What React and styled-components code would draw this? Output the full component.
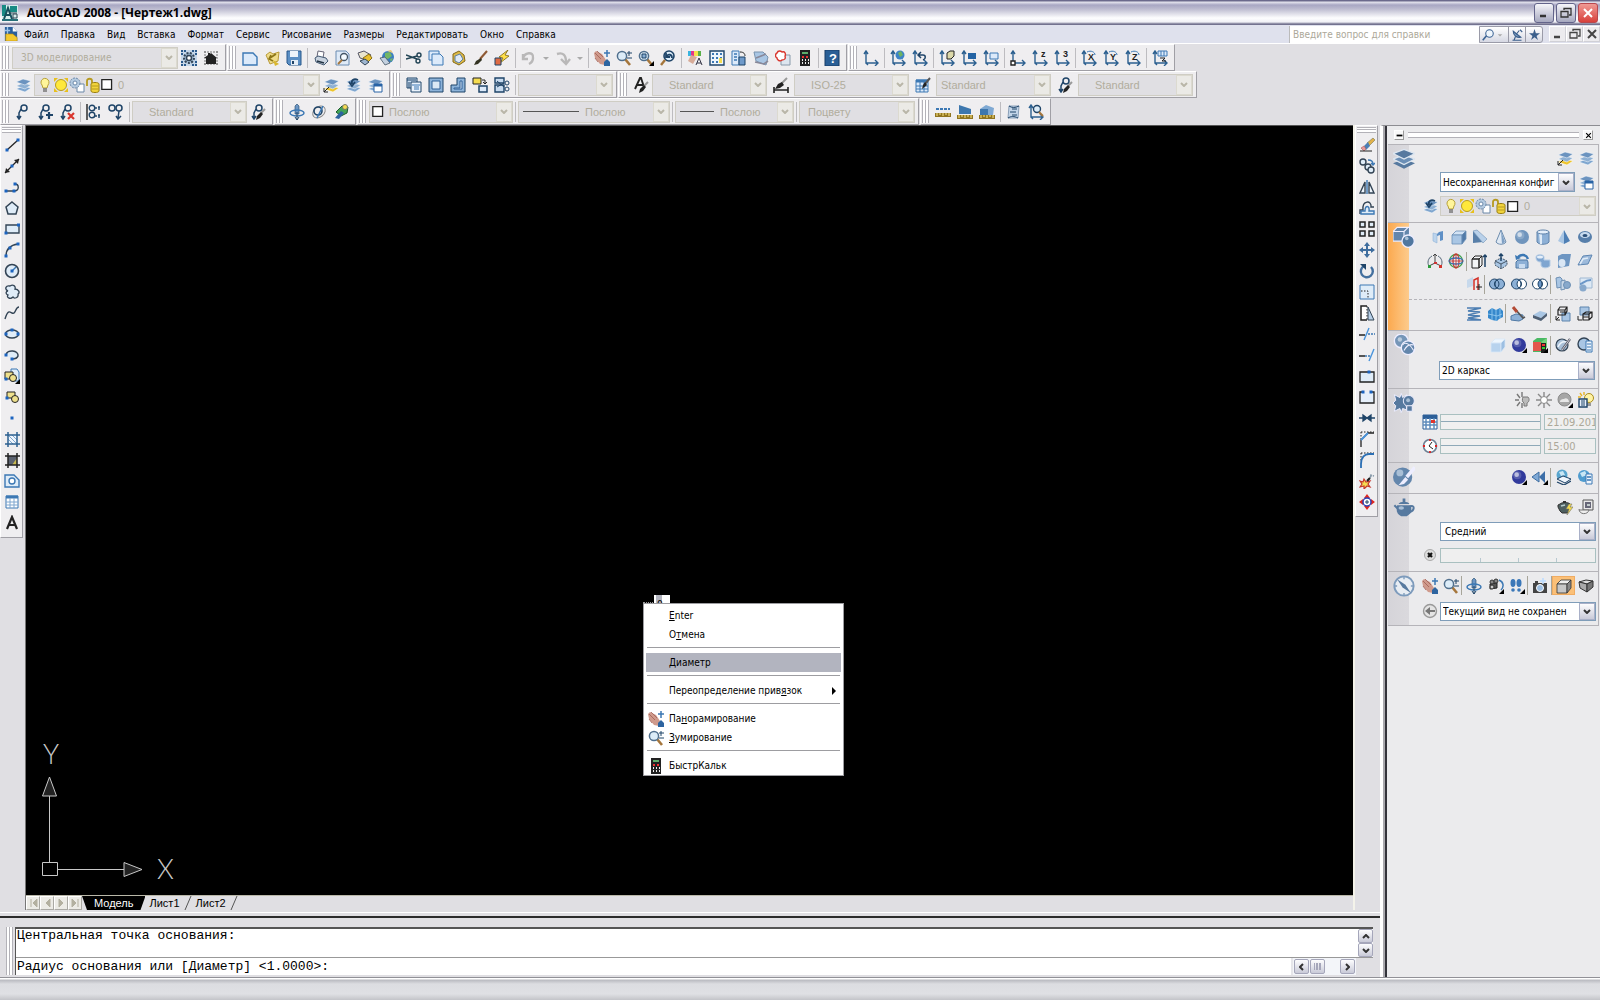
import React from 'react';
import styled, { createGlobalStyle, css } from 'styled-components';

const GlobalStyle = createGlobalStyle`
  * {
    box-sizing: border-box;
  }
  body {
    margin: 0;
    background: #e0dfe3;
    color: #000;
    font-family: "DejaVu Sans Condensed", "Open Sans", sans-serif;
    font-size: 10px;
  }
  button, input, select {
    font: inherit;
    color: inherit;
    margin: 0;
    padding: 0;
  }
`;

/* ---------- icon drawings, all on a 16x16 grid ---------- */

const N = '#1f4468';
const B = '#3c78b4';
const M = '#7fa6cf';
const L = '#d3e3f4';
const Y = '#f5dc50';
const K = '#222';

const Axes = () => (
  <path d="M3 1v12h12M3 13l2 2M1 4l2-3 2 3M12 10l3 3-3 3" stroke="#2c6090" strokeWidth="1.4" fill="none" />
);

const LayerStack = ({ low = M }) => (
  <g stroke="#fff" strokeWidth=".5">
    <path d="M1 12l7-3 8 2-6 4z" fill={low} />
    <path d="M1 9l7-3 8 2-6 4z" fill="#8eb0d3" />
    <path d="M1 5l7-3 8 2-6 4z" fill="#6b93bf" />
  </g>
);

const Leader = () => (
  <g fill="none" stroke={N} strokeWidth="1.5">
    <circle cx="9" cy="4" r="3" />
    <path d="M6 5L4 9v5M2 12l2 3 2-3" />
  </g>
);

const Brush = () => (
  <g>
    <path d="M15 5l-4 4" stroke="#999" strokeWidth="2" />
    <path d="M11 8l2 2-3 4-4 2 1-4z" fill={K} />
  </g>
);

const Corner = () => <path d="M16 11v5h-5z" fill="#000" />;

const Ball = ({ cx = 8, cy = 8, r = 6, fill = '#6f96c2' }) => (
  <g>
    <circle cx={cx} cy={cy} r={r} fill={fill} />
    <circle cx={cx - r / 4} cy={cy - r / 4} r={r / 1.7} fill="#fff" opacity=".18" />
    <circle cx={cx - r / 3} cy={cy - r / 3} r={r / 3} fill="#fff" opacity=".6" />
  </g>
);

const Dot = ({ x, y }) => <rect x={x - 1.5} y={y - 1.5} width="3" height="3" fill="#1c64c0" />;

const Box = ({ front = '#a9c6e4', top = L, side = '#527ba8', stroke = '#6b8fb6' }) => (
  <g stroke={stroke} strokeWidth=".8" strokeLinejoin="round">
    <path d="M1 6l4-4h10l-4 4z" fill={top} />
    <path d="M1 6h10v9H1z" fill={front} />
    <path d="M11 6l4-4v8l-4 5z" fill={side} />
  </g>
);

const Lens = () => (
  <g>
    <path d="M9 9l5 6" stroke="#a5763c" strokeWidth="2.6" />
    <circle cx="6" cy="6" r="4.6" fill="#dcecf8" stroke="#51708e" strokeWidth="1.5" />
  </g>
);

const Letter = ({ children, x = 9, y = 7 }) => (
  <text x={x} y={y} fontFamily="Liberation Sans, sans-serif" fontSize="9" fontWeight="700" fill="#222">{children}</text>
);

const Turn = () => <path d="M6 2c4-2 8 0 8 3" stroke={B} fill="none" />;

const Ruler = ({ y = 11 }) => (
  <g>
    <path d={`M0 ${y}h16v4H0z`} fill="#8f7420" />
    <path d={`M2 ${y}v3M5 ${y}v2M8 ${y}v3M11 ${y}v2M14 ${y}v3`} stroke="#ffe98a" />
  </g>
);

const glyphs = {
  app: <g><path d="M0 0h16v16H0z" fill="#d8efec" /><path d="M0 0h4v11H0zM8 1h7v6H8z" fill="#178a84" /><path d="M2 14L6 3l4 11M4 10h5" stroke="#16505c" strokeWidth="2" fill="none" /><path d="M11 15V9h4v4h-4M7 8h8" stroke="#345" fill="none" /><path d="M0 14h16v2H0z" fill="#276f78" /></g>,
  doc: <g><path d="M1 0h9l5 5v11H1z" fill="#2b5f9c" /><path d="M10 0l5 5h-5z" fill="#fff" /><path d="M4 0v9M1 4h6" stroke="#9cc4ea" strokeWidth="1.5" /><path d="M2 8h8l5 4v4H2z" fill="#f4c92f" stroke="#b98d10" strokeWidth=".7" /></g>,
  gearFrame: <g><path d="M0 0h16v16H0z" fill="#c5d6e8" /><path d="M1 5V1h4M11 1h4v4M15 11v4h-4M5 15H1v-4" stroke="#2b5a8c" strokeWidth="2" fill="none" strokeDasharray="2 1" /><circle cx="8" cy="8" r="5" fill="#9bb6d0" stroke="#345" strokeWidth="2" strokeDasharray="2 1.4" /><circle cx="8" cy="8" r="2.500" fill="#fff" stroke="#345" strokeWidth="1.500" /></g>,
  house: <g><path d="M1 2h14M2 1v14M1 14h14M14 1v14" stroke="#777" strokeDasharray="2 1" fill="none" /><path d="M1 8l4-3V3h2v1l1-1 6 5h-1v6H3V8z" fill="#222" /></g>,
  new: <path d="M1 3h10l4 4v8H1z" fill="#dceafa" stroke={B} strokeWidth="1.4" />,
  open: <g><path d="M2 5l4 9 8-3 1-9-6 2-3-2z" fill="#efdc8a" stroke="#b99b3a" /><path d="M12 4L6 8M7 5L5 9l4 2" stroke="#8d7616" strokeWidth="1.6" fill="none" /><path d="M9 10l6 4-4 2z" fill="#d9b72f" /></g>,
  save: <g><path d="M1 1h14v14H3l-2-2z" fill="#5b8fc4" stroke="#28598c" /><path d="M4 1h8v6H4z" fill="#eef4fb" /><path d="M5 10h7v5H5z" fill="#e4edf6" /><path d="M6 11h2v3H6z" fill={N} /></g>,
  print: <g><path d="M4 7l1-6 6 1-1 6z" fill="#fff" stroke="#667" /><path d="M2 8l3-2 8 2 2 3-4 4-8-3z" fill="#c9d3df" stroke="#445a73" /><path d="M4 11l7 2" stroke="#234" strokeWidth="1.5" /></g>,
  preview: <g><path d="M1 1h10l3 3v11H1z" fill="#dfeaf7" stroke="#6a8cb2" /><circle cx="9" cy="7" r="3.5" fill="#f5fbff" stroke="#456" strokeWidth="1.3" /><path d="M7 10l-4 4" stroke="#a5763c" strokeWidth="2" /></g>,
  publish: <g><path d="M1 3l6-2 7 4-4 5-7-2z" fill="#e8e4ce" stroke="#556" /><path d="M6 8l6-4 3 4-5 5z" fill="#e9c02f" stroke="#8a6f12" /><path d="M3 11l5-2 4 3-4 3z" fill="#9fb6d0" stroke="#345" /></g>,
  globe: <g><circle cx="9" cy="7" r="6" fill="#3a7dc2" /><path d="M6 3l5-1 2 4-4 3-3-1zM11 9l3-1-2 4z" fill="#74b665" /><path d="M1 8l5-1 5 6-5 2z" fill="#c3d0df" stroke="#456" strokeWidth=".8" /><path d="M8 1l4-1 2 3" fill="#e8c57a" /></g>,
  cut: <g stroke="#245" fill="none" strokeWidth="1.4"><path d="M0 5l11 4M0 9l11-3" /><circle cx="13" cy="5" r="2" /><circle cx="12" cy="11" r="2" /></g>,
  copy: <g fill="#dceafa" stroke={B}><path d="M1 1h10v9H1z" /><path d="M4 4h8l3 3v8H4z" /></g>,
  paste: <g><path d="M3 4l6-3 5 4 1 6-6 4-6-3z" fill="#ddb947" stroke="#82691a" /><path d="M5 6l5-2 3 5-4 4-4-2z" fill="#dfeaf7" stroke="#5b7fa6" /></g>,
  brush: <g><path d="M15 1L8 9" stroke="#8f5a35" strokeWidth="2" /><path d="M9 8l1 2-4 4-4 1 2-4z" fill="#332" /></g>,
  bolt: <g><path d="M14 0L5 7l4 1-3 5 9-7-4-1z" fill="#ffe04a" stroke="#7c6410" strokeWidth=".8" /><path d="M1 8h6v7H1z" fill="#df6a43" stroke={N} /></g>,
  undo: <path d="M2 9c1-7 11-8 10-1 0 3-2 5-4 6M2 4v5h5" fill="none" stroke="#b9b8b8" strokeWidth="2.400" />,
  redo: <path d="M2 4c6-2 9 1 9 8M6 9l5 5 4-5" fill="none" stroke="#b9b8b8" strokeWidth="2.400" />,
  down: <path d="M5 7h6l-3 3z" fill="#aaa" />,
  pan: <g><path d="M0 3l2-2 6 3 4 6-1 5-5-1-5-6z" fill="#cf9a8c" /><path d="M1 3l6 6M3 1l6 6M4 12L1 8" stroke="#a16055" strokeWidth=".8" /><path d="M13 0v7M10 3h6" stroke={B} strokeWidth="1.5" /><path d="M10 12l3-3 3 3v4h-6z" fill="#2d64a0" /></g>,
  zoomRt: <g><Lens /><path d="M13 1v5M11 3h5M11 8h5" stroke={N} /></g>,
  zoomWin: <g><Lens /><path d="M4 4h4v4H4z" fill="#88aed4" stroke={N} /><Corner /></g>,
  zoomPrev: <g><circle cx="9" cy="6" r="5" fill="#dcecf8" stroke={N} strokeWidth="1.6" /><path d="M5 10l-4 5" stroke="#a5763c" strokeWidth="2.4" /><path d="M12 8c0-4-4-4-5-2M6 3v4h4" stroke={N} strokeWidth="1.8" fill="none" /></g>,
  props: <g><path d="M1 1h13v5H1z" fill="#f5e04a" /><path d="M1 1h3v5H1z" fill="#38b4e0" /><path d="M4 1h3v5H4z" fill="#e2348c" /><path d="M11 1h3v5h-3z" fill="#59b048" /><path d="M1 11l3-6 6 2-4 7z" fill="#d7ab98" /><path d="M9 15l3-7 3 7M10 13h4" stroke="#334" fill="none" /></g>,
  grid: <g><path d="M1 1h14v14H1z" fill="#eef5fc" stroke={N} strokeWidth="1.4" /><path d="M3 4h10M3 8h10M3 12h10" stroke={B} strokeWidth="2" strokeDasharray="2 2" /><path d="M10 8h3v5h-3z" fill={Y} /></g>,
  palettes: <g><path d="M1 1h7v14H1z" fill="#dceafa" stroke={B} /><path d="M3 4h3M3 7h3M3 10h3" stroke={B} strokeWidth="1.4" /><path d="M8 7h6v8H8z" fill="#6f9aca" stroke={N} /><path d="M9 2c4 0 5 2 5 4" stroke={K} fill="none" /></g>,
  sheets: <g><path d="M1 2h9l5 5-2 8-10-4z" fill="#a9c6e4" stroke="#7893ae" /><path d="M3 8l10-4M2 12l9 2 4-3" stroke="#889" strokeWidth="1.6" fill="none" /></g>,
  markup: <g><path d="M6 5h9v10H6z" fill="#dde6f0" stroke="#89a" /><path d="M2 3c1-3 4-2 5-1 3-1 4 2 3 4 1 3-1 4-3 4-2 2-5 0-5-2-2-1-2-4 0-5z" fill="#fff" stroke="#d9362e" strokeWidth="1.4" /></g>,
  calc: <g><path d="M3 0h10v16H3z" fill="#222" /><path d="M5 2h6v2H5z" fill="#5fae6a" /><path d="M5 7h2M9 7h2" stroke="#e33" strokeWidth="2" /><path d="M5 10h1m2 0h1m2 0h1M5 13h1m2 0h1m2 0h1" stroke="#eee" strokeWidth="2" /></g>,
  help: <g><path d="M1 0h14v16H1z" fill="#2a5f96" stroke="#173d66" /><text x="5" y="13" fontFamily="Liberation Sans, sans-serif" fontSize="13" fontWeight="700" fill="#fff">?</text></g>,

  ucs: <Axes />,
  ucsWorld: <g><Axes /><circle cx="10" cy="5" r="4.500" fill="#3d83c6" /><path d="M8 3l3-2 2 4-3 2z" fill="#6db35f" /></g>,
  ucsPrev: <g><Axes /><path d="M7 5h4c3 0 3 4 0 5M9 2L6 5l3 3" stroke={N} strokeWidth="1.5" fill="none" /></g>,
  ucsFace: <g><Axes /><path d="M8 3l3-2h4v5l-3 3H8z" fill="#dcd8a9" stroke={K} /></g>,
  ucsObj: <g><Axes /><path d="M7 3h8v6H7z" fill="#2464a4" /></g>,
  ucsView: <g><Axes /><path d="M7 3h8v6H7z" fill="#dceafa" stroke={B} /></g>,
  ucsOrigin: <g><Axes /><path d="M1 11h4v4H1z" fill="#fff" stroke={K} strokeWidth="1.4" /></g>,
  ucsZ: <g><Axes /><Letter>z</Letter></g>,
  ucs3: <g><Axes /><Letter>3</Letter></g>,
  ucsX: <g><Axes /><Letter x={7} y={10}>X</Letter><Turn /></g>,
  ucsY: <g><Axes /><Letter x={7} y={10}>Y</Letter><Turn /></g>,
  ucsZr: <g><Axes /><Letter x={7} y={10}>Z</Letter><Turn /></g>,
  ucsApply: <g><Axes /><path d="M6 1h9v5H6zM9 1v5M12 1v5" fill="#dceafa" stroke={B} /><path d="M8 8h5l-3 3h4" stroke={K} fill="none" /></g>,

  layers: <LayerStack />,
  bulb: <g><path d="M4 5a4 4 0 1 1 7 3l-1 3H6L5 8a4 4 0 0 1-1-3z" fill="#fff59a" stroke="#b7a13a" /><path d="M6 12h4M6 14h4" stroke="#777" strokeWidth="1.4" /></g>,
  sun: <g><path d="M1 1h4L1 5zM15 1h-4l4 4zM1 15h4l-4-4zM15 15h-4l4-4z" fill="#e8c01c" /><circle cx="8" cy="8" r="5.500" fill="#ffe83b" stroke="#b79c20" /></g>,
  freeze: <g><path d="M8 7h7v8H8z" fill="#fff" stroke="#6b88a8" /><circle cx="6" cy="6" r="5" fill="#b4cae0" stroke="#6b88a8" strokeDasharray="2 1" /><circle cx="6" cy="6" r="2" fill="#fff" stroke="#6b88a8" /></g>,
  lock: <g><path d="M2 9V4c0-3 5-3 5 0v2" stroke="#b69a20" strokeWidth="1.8" fill="none" /><path d="M6 7c0-2 8-2 8 0v7c0 2-8 2-8 0z" fill="#f2d43c" stroke="#967c10" /><path d="M7 9h6M7 12h6" stroke="#b69a20" /></g>,
  swatch: <path d="M1 2h12v12H1z" fill="#fff" stroke="#222" strokeWidth="1.6" />,
  layerCurrent: <g><LayerStack low="#edc42c" /><path d="M1 15l5-5M1 11v4h4" stroke={K} fill="none" /></g>,
  layerPrev: <g><LayerStack /><path d="M7 7c-1-4 2-6 6-4M4 5l3 4 3-4" stroke={N} strokeWidth="1.8" fill="none" /></g>,
  layerState: <g><LayerStack /><path d="M7 7h8v8H7z" fill="#fff" stroke="#2863a5" /><path d="M7 7h8v2.500H7z" fill="#2863a5" /></g>,
  refEdit: <g><path d="M1 1h10v10H1z" fill="#c9dcf0" stroke={N} /><path d="M1 3h9M3 5v6" stroke={N} /><path d="M5 5h10v10H5z" fill="#eaf2fb" stroke={N} /><path d="M6 8h8M8 10h5M8 12h5" stroke={B} /></g>,
  vpNew: <g><path d="M1 1h14v14H1z" fill="#8db3d9" stroke={N} /><path d="M4 4h8v8H4z" fill="#dbe8f5" stroke="#2e6198" /></g>,
  vpPoly: <g><path d="M7 1h8v14H1V8h6z" fill="#8db3d9" stroke={N} /><path d="M10 4h2v8H4v-1h6z" fill="#dbe8f5" stroke="#2e6198" /></g>,
  vpObj: <g><path d="M1 1h8v6H1z" fill={Y} stroke={K} /><path d="M7 9h8v6H7z" fill="#dceafa" stroke={N} strokeWidth="1.5" /><path d="M10 3h3v4M11 5l2 2 2-2" stroke={K} fill="none" /></g>,
  vpClip: <g><path d="M1 1h9v5H1zM1 8h9v7H1z" fill="#c9dcf0" stroke={N} strokeWidth="1.4" /><path d="M3 4l7 6M3 10l7-4" stroke={N} /><circle cx="13" cy="6" r="2" fill="none" stroke={N} /><circle cx="13" cy="12" r="2" fill="none" stroke={N} /></g>,
  textStyle: <g><path d="M2 12L7 1h1l3 9M4 8h6" stroke={K} strokeWidth="1.9" fill="none" /><Brush /></g>,
  dimStyle: <g><path d="M14 1l-6 6" stroke="#999" strokeWidth="2" /><path d="M9 5l2 3-4 3-5 1 3-5z" fill={K} /><path d="M1 13h14M1 10v6M15 10v6" stroke={K} strokeWidth="1.6" /></g>,
  tableStyle: <g><path d="M1 3h12v12H1z" fill="#dceafa" stroke={B} /><path d="M1 4h12" stroke={B} strokeWidth="3" /><path d="M5 5v10M9 5v10M1 9h12M1 12h12" stroke={B} /><path d="M15 1l-5 6" stroke="#555" strokeWidth="2" /><path d="M10 5l2 3-5 4 1-4z" fill={K} /></g>,
  leaderStyle: <g><Leader /><Brush /></g>,

  leader: <Leader />,
  leaderAdd: <g><Leader /><path d="M12 8v7M9 11h7" stroke={N} strokeWidth="2.2" /></g>,
  leaderDel: <g><Leader /><path d="M9 9l6 6M15 9l-6 6" stroke="#d9362e" strokeWidth="2.2" /></g>,
  leaderAlign: <g fill="none" stroke={N} strokeWidth="1.4"><path d="M1 0v16" stroke={K} /><circle cx="6" cy="4" r="2.800" /><circle cx="6" cy="11" r="2.800" /><path d="M9 4h5M9 12h5M13 2v4M13 10v4" strokeDasharray="2 1" /></g>,
  leaderCollect: <g fill="none" stroke={N} strokeWidth="1.5"><circle cx="4" cy="4" r="3" /><circle cx="11" cy="4" r="3" /><path d="M11 7l-1 7M8 12l2 3 3-3" /></g>,
  orbit: <g><path d="M6 2l2-2 2 2v8H6z" fill="#6c96c4" stroke={N} strokeWidth=".6" /><ellipse cx="8" cy="9" rx="7" ry="3" fill="none" stroke={B} strokeWidth="1.5" /><path d="M8 8v8M6 13l2 3 2-3" stroke={N} fill="none" /></g>,
  freeOrbit: <g fill="none"><ellipse cx="8" cy="8" rx="7" ry="5" stroke="#888" transform="rotate(-40 8 8)" /><circle cx="7" cy="7" r="4" stroke={N} strokeWidth="1.6" /><path d="M12 2l-6 12" stroke={B} strokeWidth="1.6" /></g>,
  contOrbit: <g><path d="M3 8l6-6 6 1-1 6-6 3z" fill="#43a457" stroke="#1c5a2c" /><path d="M2 14l6-7 3 2-5 6z" fill="#2b62a0" /><circle cx="12" cy="3" r="2.500" fill={Y} stroke="#776" /></g>,
  dist: <g><path d="M1 5h14" stroke={B} strokeWidth="2" strokeDasharray="3 1" /><Ruler y={9} /></g>,
  area: <g><path d="M2 1l12 4v5H2z" fill="#3d77ae" /><Ruler /></g>,
  mass: <g><path d="M1 5l6-4 8 3-1 7H1z" fill="#7fa9d3" /><path d="M1 5h8v6H1z" fill="#3d77ae" /><Ruler /></g>,
  list: <g><path d="M3 2h10l-1 12H2z" fill="#c3d5e8" stroke="#8aa0b8" /><path d="M3 2c3 2 6 2 10 0M2 14c3-2 6-2 10 0M6 5h5M4 8h6M6 11h5" stroke={N} fill="none" /></g>,
  locate: <g><Axes /><circle cx="9" cy="5" r="3.500" fill="#dcecf8" stroke={N} strokeWidth="1.4" /><path d="M11 8l4 4" stroke="#a5763c" strokeWidth="2" /></g>,

  line: <g><path d="M3 13L14 3" stroke={K} strokeWidth="1.3" /><Dot x={3} y={13} /><Dot x={14} y={3} /></g>,
  xline: <g><path d="M1 15L15 1" stroke={K} strokeWidth="1.3" /><path d="M1 15l1-5 4 4zM15 1l-5 1 4 4z" fill={K} /><Dot x={8} y={8} /></g>,
  pline: <g><path d="M1 12h9c6 0 5-7 1-7" stroke="#345" strokeWidth="1.4" fill="none" /><Dot x={2} y={12} /><Dot x={10} y={12} /><Dot x={11} y={5} /></g>,
  polygon: <path d="M8 2l6 5-2 7H4L2 7z" fill="#dfecf8" stroke="#345" strokeWidth="1.5" />,
  rect: <g><path d="M2 4h13v8H2z" fill="#dfecf8" stroke="#345" strokeWidth="1.4" /><Dot x={14.5} y={4} /><Dot x={2} y={12} /></g>,
  arc: <g><path d="M2 14C2 7 7 3 14 2" stroke="#345" strokeWidth="1.4" fill="none" /><Dot x={2} y={14} /><Dot x={6} y={6} /><Dot x={14} y={2} /></g>,
  circle: <g><circle cx="8" cy="8" r="6.500" fill="#dfecf8" stroke="#345" strokeWidth="1.6" /><path d="M8 8l4-4" stroke={B} strokeWidth="1.4" /><Dot x={8} y={8} /></g>,
  cloud: <path d="M4 7C0 5 2 1 6 2c3-2 6 0 5 3 4 0 5 4 3 5 1 4-4 5-5 3-3 3-7 0-5-2-3-1-2-4 0-4z" fill="#dfecf8" stroke="#345" strokeWidth="1.3" />,
  spline: <path d="M1 14c3-10 5-7 7-6 4 2 3-6 7-6" fill="none" stroke="#345" strokeWidth="1.4" />,
  ellipse: <g><ellipse cx="8" cy="8" rx="6.500" ry="4" fill="#dfecf8" stroke="#345" strokeWidth="1.5" /><Dot x={2} y={8} /><Dot x={14} y={8} /><Dot x={8} y={4} /></g>,
  ellArc: <g><path d="M2 8c1-6 13-5 12 1-1 3-4 3-6 3" fill="#dfecf8" stroke="#345" strokeWidth="1.5" /><Dot x={2} y={8} /><Dot x={8} y={12} /></g>,
  insert: <g><path d="M7 1h6l2 3v9H7z" fill="#dfecf8" stroke={B} /><path d="M1 4h8v7H1z" fill="#eee08c" stroke={K} /><circle cx="9" cy="10" r="3.500" fill="#eee08c" stroke={K} /><Dot x={2} y={11} /><Corner /></g>,
  block: <g><path d="M3 3h8v6H3z" fill="#eee08c" stroke={K} /><circle cx="11" cy="10" r="3.500" fill="#eee08c" stroke={K} /><Dot x={3} y={9} /></g>,
  point: <Dot x={8} y={8} />,
  hatch: <g><path d="M4 4h9v9H4z" fill="#eef5fc" /><path d="M4 4l9 9M4 8l5 5M8 4l5 5" stroke={M} /><path d="M1 4h15M1 13h15M4 1v15M13 1v15" stroke="#2c6090" strokeWidth="1.5" /></g>,
  gradient: <g><path d="M4 4h9v9H4z" fill="#5b6270" /><path d="M8 13l5-7v7z" fill="#c9ba50" /><path d="M1 4h15M1 13h15M4 1v15M13 1v15" stroke={K} strokeWidth="1.5" /></g>,
  region: <g><path d="M1 2h9l5 5v7H1z" fill="#dfecf8" stroke={B} strokeWidth="1.4" /><circle cx="8" cy="8" r="3" fill="#fff" stroke={B} strokeWidth="1.4" /></g>,
  table: <g><path d="M2 2h12v12H2z" fill="#fff" stroke={B} /><path d="M2 3h12" stroke={B} strokeWidth="3" /><path d="M6 4v10M10 4v10M2 8h12M2 11h12" stroke={M} /></g>,
  mtext: <path d="M3 14L8 2l5 12M5 10h6" stroke="#222" strokeWidth="2.200" fill="none" />,

  erase: <g><path d="M8 6l6-5 2 2-6 6z" fill="#e2b24a" stroke="#775" strokeWidth=".6" /><path d="M5 9l4-4 2 4-4 4z" fill="#4b7fb5" /><path d="M2 11l3-2 2 3-2 2z" fill="#e79a9a" stroke="#a55" strokeWidth=".6" /><path d="M1 14h12" stroke={K} /></g>,
  copyObj: <g fill="#dfecf8" stroke="#345" strokeWidth="1.4"><circle cx="4" cy="4" r="3" /><circle cx="9" cy="9" r="3" /><circle cx="12" cy="12" r="3" /><path d="M9 2c3 0 5 1 5 4M12 5l2 2 2-2" fill="none" stroke={B} /></g>,
  mirror: <g><path d="M6 3v11H1zM10 3v11h5z" fill="#eef5fc" stroke="#345" strokeWidth="1.4" /><path d="M8 1v14" stroke={B} strokeWidth="1.4" /></g>,
  offset: <g><path d="M1 14v-4h3C3 0 13 0 12 7h3" stroke="#345" strokeWidth="1.400" fill="none" /><path d="M2 14h13v-3h-5c1-6-4-6-4 0H2z" fill="#dfecf8" stroke={B} strokeWidth="1.400" /></g>,
  array: <g fill="#dfecf8" stroke="#222" strokeWidth="1.5"><path d="M1 1h5v5H1zM10 1h5v5h-5zM1 10h5v5H1zM10 10h5v5h-5z" /></g>,
  move: <g fill="#3f6d9e"><path d="M8 0l3 4H9v3h3V5l4 3-4 3V9H9v3h2l-3 4-3-4h2V9H4v2L0 8l4-3v2h3V4H5z" /></g>,
  rotate: <g><path d="M5 3a6 6 0 1 0 7 1" fill="none" stroke="#44709f" strokeWidth="2.4" /><path d="M1 1h6v6z" fill={N} /></g>,
  scale: <g><path d="M1 1h14v14H1z" fill="#dfecf8" stroke={B} /><path d="M2 7h7v8" fill="none" stroke={K} strokeDasharray="1.500 1.500" /></g>,
  stretch: <g><path d="M8 1H2v14h6" fill="#fff" stroke={K} strokeWidth="1.500" /><path d="M8 1v14" stroke={K} strokeDasharray="1.500 1.500" /><path d="M9 2l6 13H9z" fill="#b7cfe8" stroke="#345" /></g>,
  trim: <g><path d="M0 9h6" stroke={K} strokeWidth="1.500" /><path d="M9 8h7" stroke={B} strokeDasharray="2 1" strokeWidth="1.300" /><path d="M5 14l5-12" stroke="#4a94dc" strokeWidth="1.400" /></g>,
  extend: <g><path d="M0 9h6" stroke={K} strokeWidth="1.500" /><path d="M6 9h6" stroke={B} strokeDasharray="2 1" strokeWidth="1.300" /><path d="M10 14l5-12" stroke="#4a94dc" strokeWidth="1.400" /></g>,
  breakPt: <g><path d="M1 4h14v10H1z" fill="#dfecf8" stroke={K} strokeWidth="1.300" /><Dot x={10} y={4} /></g>,
  breakGap: <g><path d="M1 3h14v11H1z" fill="#e6effa" /><path d="M4 3H1v11h14V3h-3" fill="none" stroke={K} strokeWidth="1.300" /><Dot x={4} y={3} /><Dot x={12} y={3} /></g>,
  join: <path d="M0 8h5M11 8h5M4 5l4 3-4 3zM12 5L8 8l4 3z" stroke={N} fill={N} strokeWidth="1.300" />,
  chamfer: <g fill="none"><path d="M2 1h13M2 1v8" stroke={K} strokeDasharray="1.500 1.500" /><path d="M2 16V9l7-7h6" stroke={K} strokeWidth="1.300" /><path d="M2 9l7-7" stroke="#4a94dc" strokeWidth="1.800" /></g>,
  fillet: <g fill="none"><path d="M2 1h13M2 1v8" stroke={K} strokeDasharray="1.500 1.500" /><path d="M2 16v-4C2 5 6 2 10 2h5" stroke="#2c6fb4" strokeWidth="1.800" /></g>,
  explode: <g><path d="M9 7l4-5M11 2l4 1" stroke="#89a" strokeWidth="1.600" strokeDasharray="2 1" /><path d="M1 8l3 1 1-3 2 3 4-1-2 3 2 3-3-1-3 3v-3l-4 1 2-3z" fill={Y} stroke="#c4362c" strokeWidth="1.200" /><path d="M8 8l3-3" stroke={K} strokeWidth="2.200" /></g>,
  center: <g><path d="M8 0l3 4H5zM8 16l3-4H5zM0 8l4-3v6zM16 8l-4-3v6z" fill="#e0271f" /><circle cx="8" cy="8" r="4" fill="#fff" stroke="#2c3fb4" strokeWidth="1.500" /><path d="M8 6v4M6 8h4" stroke={N} /></g>,

  polysolid: <g><path d="M3 4l4 1v9l-4-2z" fill="#bdd4ec" stroke="#8fb2d8" strokeWidth=".6" /><path d="M7 5l2-2 4-1v9l-3 1V6L7 7z" fill="#5f90c6" /></g>,
  box: <Box />,
  wedge: <g><path d="M1 2l10 11-10 1z" fill="#587fa9" /><path d="M1 2l4-1 10 9-4 4z" fill="#b9d1ea" stroke="#7d9cbd" strokeWidth=".7" /></g>,
  cone: <g><path d="M8 1l5 12c-2 3-8 3-10 0z" fill="#dfe9f4" stroke="#6d8cad" /><path d="M8 2l4 11-3 2z" fill="#7fa0c4" /></g>,
  sphere: <Ball r={7} fill="#7095bd" />,
  cylinder: <g><path d="M2 3v10c2 3 10 3 12 0V3z" fill="#8db0d6" stroke="#5e82aa" /><path d="M4 4h3v11H5z" fill="#dfebf7" /><ellipse cx="8" cy="3" rx="6" ry="2" fill="#e5effa" stroke="#5e82aa" /></g>,
  pyramid: <g><path d="M8 1L2 12l6 3z" fill="#a9c6e4" /><path d="M8 1l6 11-6 3z" fill="#4e7fb5" /></g>,
  torus: <g><ellipse cx="8" cy="8" rx="7" ry="6" fill="#577fab" /><ellipse cx="8" cy="6" rx="5" ry="3" fill="#c8dbef" /><ellipse cx="8" cy="6.500" rx="2.500" ry="1.500" fill="#2b4f78" /></g>,
  helix3: <g><path d="M8 1v9M8 10l-6 3M8 10l6 3M6 3l2-2 2 2" stroke="#444" fill="none" /><path d="M5 3C1 5 0 10 2 13M11 3c4 2 5 7 3 10" fill="none" stroke="#567" /><path d="M7 9h3v2H7z" fill="#c33" /><path d="M1 12h3v3H1z" fill="#2c9a3c" /><path d="M12 12h3v3h-3z" fill="#d2342c" /></g>,
  gizmo: <g fill="none" strokeWidth="1.300"><circle cx="8" cy="8" r="6.500" stroke="#3ba04a" /><ellipse cx="8" cy="8" rx="3" ry="7" stroke="#cf3c34" /><ellipse cx="8" cy="8" rx="7" ry="3" stroke="#3a6db0" /><path d="M1 8h14M8 1v14" stroke="#b33" strokeWidth=".8" /></g>,
  extrude: <g><path d="M1 6l3-3h7L8 6zM1 6h7v9H1zM8 6l3-3v9l-3 3z" fill="#f4f6f8" stroke="#222" strokeLinejoin="round" /><path d="M14 14V2M12 4l2-2 2 2" stroke={N} strokeWidth="1.500" fill="none" /></g>,
  pull: <g><path d="M2 8l6-3 6 3v4l-6 4-6-4z" fill="#a9c6e4" stroke="#456" strokeDasharray="2 1" /><path d="M2 8l6 3 6-3M8 11v5" stroke="#456" fill="none" /><path d="M8 8V1M6 3l2-2 2 2" stroke={N} fill="none" strokeWidth="1.500" /></g>,
  revolve: <g><path d="M2 9l2-2h9l1 2v6H2z" fill="#8db0d6" stroke="#4e78a4" /><path d="M5 11h6v4H5z" fill="#c9dcf0" /><path d="M4 4c3-3 8-3 10 2" fill="none" stroke={B} strokeWidth="2.400" /><path d="M1 2l1 5 5-2z" fill={B} /></g>,
  sweep: <g><path d="M1 4c0-3 8-3 8 0v3h6v6c-3 3-9 2-9-1V9c-3 0-5-1-5-5z" fill="#7fa5d0" stroke="#b7cde5" /><ellipse cx="5" cy="4" rx="3" ry="1.500" fill="#e5effa" /></g>,
  loft: <g><path d="M2 3l4-2h9l-2 12-11 2z" fill="#6e96c2" /><ellipse cx="6" cy="10" rx="3.500" ry="4" fill="#d9e6f4" /></g>,
  planar: <g><path d="M1 12l5-9 9-1-4 9z" fill="#9dbadb" stroke="#5e86b2" /><path d="M3 11l3-5 5-1" fill="none" stroke="#dfebf7" strokeWidth="1.500" /></g>,
  section: <g><path d="M1 4l6-3v9l-6 2z" fill="#c7d9ec" /><path d="M8 14V4l4-2v12" fill="none" stroke="#d3322a" strokeWidth="1.500" /><path d="M13 8v6M10 11h6" stroke={K} /></g>,
  union: <g stroke={N} fill="#8cb0d6"><circle cx="5.500" cy="8" r="5" /><circle cx="10.500" cy="8" r="5" /><path d="M8 4a5 5 0 0 1 0 8 5 5 0 0 1 0-8z" /></g>,
  subtract: <g stroke={N}><circle cx="10.500" cy="8" r="5" fill="#fff" /><circle cx="5.500" cy="8" r="5" fill="#8cb0d6" /><path d="M8 4a5 5 0 0 1 0 8 5 5 0 0 1 0-8z" fill="#fff" /></g>,
  intersect: <g stroke={N} fill="#fff"><circle cx="10.500" cy="8" r="5" /><circle cx="5.500" cy="8" r="5" /><path d="M8 4a5 5 0 0 1 0 8 5 5 0 0 1 0-8z" fill="#6b97c8" /></g>,
  interfere: <g><path d="M1 2l4-1 2 2v8l-5 1z" fill="#a9c6e4" stroke="#6e90b4" /><path d="M6 5l4-1v9l-4 1z" fill="#c9d8e8" stroke="#6e90b4" /><circle cx="12" cy="9" r="3.500" fill="#88a9cc" stroke="#6e90b4" /></g>,
  xedges: <g><path d="M3 2h12v10H3z" fill="#dde9f5" stroke="#9fb8d2" /><path d="M3 8c3 0 4-4 11-4" stroke="#6b97c8" strokeWidth="2" fill="none" /><circle cx="6" cy="12" r="3.500" fill="#88a9cc" /></g>,
  helix: <path d="M1 2h14L2 5l12 1L2 9l12 1L2 12l13 2H1" fill="none" stroke="#4c7eb2" strokeWidth="1.500" />,
  polymesh: <g><path d="M1 5l4-3 4 2 4-2 3 3v6l-4 2-2 2-5-1-4-2z" fill="#3688cc" /><path d="M5 2v12M9 4v11M13 3v9M1 8l5 1 4 1 5-2" stroke="#9cd0f4" strokeWidth=".8" fill="none" /></g>,
  slice: <g><path d="M1 10l5-2 7 1v4l-4 2-8-1z" fill="#8db0d6" stroke="#4e78a4" /><path d="M5 3l8 9 2-1" stroke="#555" strokeWidth="1.800" fill="none" /><path d="M3 1l4 5" stroke="#b34a35" strokeWidth="3" /></g>,
  thicken: <g><path d="M1 9l7-4 7 2-6 5z" fill="#a9c6e4" /><path d="M1 9l8 3v3l-8-3zM9 12l6-5v3l-6 5z" fill="#4e5f74" /></g>,
  convSolid: <g><path d="M7 7h8v8H7z" fill="#a9c6e4" stroke="#5d84ad" /><path d="M3 4h7v5H3zM3 4l2-3h7v4l-2 4M10 4l2-3M5 6h5" fill="none" stroke={K} strokeWidth="1.200" /><path d="M1 10v4h4M1 14l3-3" stroke={K} fill="none" /></g>,
  convSurf: <g><path d="M3 1h9v8H3z" fill="#a9c6e4" stroke="#5d84ad" /><path d="M6 8l3-2h6v5l-3 3H6zM6 8h6l3-2M12 8v6M6 11h6" fill="none" stroke={K} strokeWidth="1.200" /><path d="M1 10v4h4" stroke={K} fill="none" /></g>,
  vsBox: <Box front="#b8d3ee" top="#eef6fd" side="#9dbfe2" stroke="#d9e9f8" />,
  vsBall: <g><Ball r={7} fill="#313a9c" /><Corner /></g>,
  rgb: <g><path d="M1 4l4-3h10v9l-4 5H1z" fill="#4ab864" /><path d="M1 5h8v9H1z" fill="#e2564c" /><path d="M9 5l6-4v9z" fill="#76d47e" /><path d="M9 6h5v10H9z" fill="#222" /><path d="M10 8h3" stroke="#e33" strokeWidth="2" /><path d="M10 11h3" stroke="#3c3" strokeWidth="2" /><Corner /></g>,
  vsEdit: <g><circle cx="7" cy="8" r="6" fill="#a9c0d8" stroke="#345" strokeWidth="1.200" /><path d="M3 10c2-5 5-6 9-5" stroke="#eef5fc" strokeWidth="1.500" fill="none" /><path d="M15 2L7 13" stroke="#556" strokeWidth="2.200" /><path d="M15 2L7 13" stroke="#eee" strokeWidth=".8" /></g>,
  vsManage: <g><circle cx="7" cy="7" r="6" fill="#a9c6e4" stroke="#345" strokeWidth="1.400" /><path d="M9 4h6v11H9z" fill="#eef5fc" stroke={B} /><path d="M10 7h4M10 10h4M10 13h4" stroke={B} /></g>,
  lightUser: <g stroke="#777" fill="none"><path d="M7 0v5M7 11v5M0 8h4M2 2l3 4M2 14l3-4" strokeWidth="1.400" /><path d="M8 5h5c2 2 1 5-1 6v3H9v-3C7 10 7 7 8 5z" fill="#bbb" /></g>,
  lightSun: <g stroke="#8a8a8a" fill="#fff"><path d="M8 0v16M0 8h16M2 2l12 12M14 2L2 14" strokeWidth="1.400" /><circle cx="8" cy="8" r="3.500" /></g>,
  sky: <g><circle cx="7.500" cy="7.500" r="6.500" fill="#a6a6a6" stroke="#8a8a8a" /><path d="M3 10c0-3 3-3 4-3 2-2 5 0 5 3z" fill="#e6e6e6" /><Corner /></g>,
  lightList: <g><path d="M6 0v3M2 1l2 3M0 5h3" stroke="#e7b426" strokeWidth="1.400" /><circle cx="11" cy="6" r="4.500" fill="#fff3a4" stroke="#a98d1e" /><path d="M9 11h4v3H9z" fill="#999" /><path d="M1 7h8v8H1z" fill="#e9f1fb" stroke={N} strokeWidth="1.400" /><path d="M3 9h4M3 11h4M3 13h4" stroke={N} /></g>,
  calendar: <g><path d="M1 1h14v14H1z" fill="#fff" stroke="#2c5f98" /><path d="M1 3h14" stroke="#2c5f98" strokeWidth="4" /><path d="M1 8h14M1 11h14M4 4v11M8 4v11M12 4v11" stroke="#5f8cbc" strokeWidth="1.500" /><path d="M9 6h4v3H9z" fill="#e2342c" /></g>,
  clock: <g><circle cx="8" cy="8" r="6.500" fill="#fff" stroke="#6d8094" strokeWidth="1.600" /><path d="M8 1v2M15 8h-2M8 15v-2M1 8h2" stroke="#d22" strokeWidth="1.800" /><path d="M10 4L7 8l4 3" stroke={K} fill="none" /></g>,
  matArrow: <g><path d="M0 8l7-5v10z" fill="#7fa9d6" stroke="#3d6da0" /><path d="M7 8l6-6v12z" fill="#3c6ea8" /><Corner /></g>,
  matLayers: <g><circle cx="7" cy="6" r="5.500" fill="#59a6cf" /><path d="M4 3l4-1 2 4-4 1z" fill="#c9e7f5" /><path d="M2 10l6-3 8 3-6 4z" fill="#eef5fc" stroke={N} /><path d="M2 13l7 3 7-4" fill="none" stroke={N} strokeWidth="1.300" /></g>,
  matMap: <g><circle cx="7" cy="7" r="6" fill="#4f9ccf" /><path d="M3 4l5-2 2 4-5 2z" fill="#c9e7f5" /><path d="M9 5h6v10H9z" fill="#eef5fc" stroke={B} /><path d="M10 8h4M10 11h4" stroke={B} strokeWidth="1.500" /></g>,
  render: <g><path d="M3 5c2-2 8-2 10 0l-1 7-2 2H5l-2-2L1 8V6z" fill="#4e5f5f" stroke="#333" /><path d="M6 2h3v2H6z" fill="#333" /><path d="M4 7l4-1" stroke="#b8cccc" strokeWidth="1.500" /><path d="M12 5l-3 5h3l-2 6 6-8h-3l2-3z" fill={Y} stroke="#776" strokeWidth=".6" /></g>,
  renderWin: <g><path d="M5 1h10v10H5z" fill="#e8e8e8" stroke="#555" /><path d="M7 3h6v6H7z" fill="#667" /><path d="M9 5h3v2H9z" fill="#c2cccc" /><path d="M1 10c0 6 9 6 10 1H1" fill="#eee" stroke="#777" /></g>,
  cancel: <g><circle cx="8" cy="8" r="5.500" fill="#ddd" stroke="#aaa" /><path d="M6 6l4 4M10 6l-4 4" stroke="#111" strokeWidth="2.200" /></g>,
  camOrbit: <g><path d="M2 6l7-1v5l-7 1z" fill="#555" stroke="#222" /><circle cx="4" cy="9" r="2" fill="#ccc" stroke="#333" /><circle cx="4" cy="4" r="2" fill="#888" stroke="#333" /><circle cx="8" cy="3" r="2" fill="#888" stroke="#333" /><path d="M11 2c5 2 5 7 2 10" fill="none" stroke={B} strokeWidth="1.500" /><Corner /></g>,
  walk: <g fill="#3a77b8"><ellipse cx="4" cy="5" rx="2.500" ry="4" /><ellipse cx="10" cy="5" rx="2.500" ry="4" /><circle cx="4" cy="12" r="1.800" /><circle cx="10" cy="12" r="1.800" /><Corner /></g>,
  camera: <g><path d="M1 5h14v10H1z" fill="#444" /><path d="M3 3h3v2H3z" fill="#444" /><circle cx="8" cy="10" r="3.500" fill="#9ec0e4" stroke="#fff" /><path d="M11 0v6M8 3h6" stroke="#bcdcff" strokeWidth="1.500" /></g>,
  parallel: <Box front="#c8c8c8" top="#eee" side="#888" stroke="#333" />,
  persp: <g stroke="#333" strokeLinejoin="round"><path d="M1 4l7-2 7 1-6 3z" fill="#ddd" /><path d="M1 4l8 2v8l-7-4z" fill="#aaa" /><path d="M9 6l6-3v6l-6 5z" fill="#777" /></g>,
  back: <g><circle cx="8" cy="8" r="6.500" fill="#e4e4e4" stroke="#999" strokeWidth="1.400" /><path d="M3 8l5-4v3h5v2H8v3z" fill="#777" /></g>,

  sideLayers: <g><path d="M0 11l8-3 8 3-8 4z" fill="#56799f" /><path d="M0 8l8-3 8 3-8 4z" fill="#6b8fb6" stroke="#dde6f0" /><path d="M0 4l8-3 8 3-8 4z" fill="#56799f" stroke="#dde6f0" /></g>,
  sideMake: <g><path d="M0 4l3-3h9v7l-3 3H0z" fill="#6386ac" stroke="#eef" strokeWidth=".8" /><path d="M0 4h8v7M8 4l3-3" fill="none" stroke="#eef" strokeWidth=".8" /><circle cx="11" cy="11" r="4.500" fill="#50779f" stroke="#eef" /><circle cx="10" cy="9" r="1.300" fill="#a9bfd6" /></g>,
  sideStyle: <g><circle cx="6" cy="5" r="5" fill="#7696b8" stroke="#eef" /><circle cx="5" cy="4" r="1.600" fill="#b9cbdd" /><circle cx="11" cy="10" r="5" fill="#6386ac" stroke="#eef" /><path d="M7 8c2-3 6 0 8 4M8 12c2-4 4-5 7-4" stroke="#eef" strokeWidth=".8" fill="none" /></g>,
  sideLight: <g fill="#56799f" stroke="#eef" strokeWidth=".7"><path d="M6 1l1 3 3-2-1 3 1 8-3-1-1 3-1-3-4 2 1-4-2-2 2-2-1-4 4 2z" /><circle cx="11.500" cy="6.500" r="4" /><path d="M10 10h4v4h-4z" /><circle cx="11" cy="6" r="1.400" fill="#a9bfd6" stroke="none" /></g>,
  sideMat: <g><circle cx="7" cy="8" r="7" fill="#6386ac" /><circle cx="5" cy="5" r="2.500" fill="#a9bfd6" /><path d="M16 1l-6 7" stroke="#eef" strokeWidth="2.600" /><path d="M9 8l2 2-3 3-4 1z" fill="#eef" /></g>,
  sideRender: <g fill="#56799f"><path d="M3 6h10c1 5 0 6-3 8H6C3 13 2 10 3 6z" /><path d="M4 5c1-2 7-2 8 0zM7 1h2v3H7z" /><path d="M4 9L1 6M12 7c4-2 4 3 0 4" fill="none" stroke="#56799f" strokeWidth="1.500" /><ellipse cx="6" cy="8" rx="2" ry="1.300" fill="#a9bfd6" /></g>,
  sideNav: <g><circle cx="8" cy="8" r="7" fill="#e8edf3" stroke="#7d9bbc" strokeWidth="1.400" /><path d="M3 3l6 4 4 6-6-4z" fill="#56799f" /><path d="M8 1v2M8 13v2M1 8h2M13 8h2" stroke="#7d9bbc" /></g>,

  find: <g><circle cx="10" cy="6" r="5" fill="#eef5fc" stroke="#3b6394" strokeWidth="1.400" /><path d="M6 9l-5 6" stroke="#3b6394" strokeWidth="2.200" /></g>,
  dish: <g fill="none" stroke="#3b5f8c" strokeWidth="1.500"><path d="M3 3c0 6 5 9 10 8z" fill="#7b9bc0" /><path d="M7 7l4-5M2 15h12M6 10l-2 5" /><path d="M12 1l3 3" /></g>,
  star: <path d="M8 0l2 6h6l-5 4 2 6-5-4-5 4 2-6-5-4h6z" fill="#3b5f8c" />,
};

const IconSvg = styled.svg`
  display: block;
  flex: none;
`;

const Icon = ({ name, size = 16 }) => (
  <IconSvg viewBox="0 0 16 16" width={size} height={size} aria-hidden="true">{glyphs[name]}</IconSvg>
);

/* ---------- shared controls ---------- */

const IconButton = styled.button`
  display: flex;
  align-items: center;
  justify-content: center;
  flex: none;
  width: ${({ $w }) => $w || 22}px;
  height: ${({ $h }) => $h || 20}px;
  border: 0;
  background: none;
  ${({ $on }) => $on && css`
    background: #fbc078;
    box-shadow: inset 0 0 0 1px #f0ac62;
  `}
  ${({ $sep }) => $sep && css`
    border-left: 1px solid #a7a59a;
  `}
`;

const Tool = ({ name, ...rest }) => (
  <IconButton type="button" aria-label={name} {...rest}><Icon name={name} /></IconButton>
);

const Separator = styled.span`
  flex: none;
  width: 1px;
  height: 20px;
  margin: 0 2px;
  background: #bdbcc0;
`;

const Grip = styled.span`
  flex: none;
  width: 7px;
  height: 23px;
  margin: 0 3px 0 1px;
  border: solid #b3b2b8;
  border-width: 0 1px;
  background: linear-gradient(90deg, #fff 0 2px, #b3b2b8 2px 3px, #fff 3px);
`;

const ComboFrame = styled.div`
  display: flex;
  align-items: center;
  flex: none;
  width: ${({ $w }) => $w}px;
  height: ${({ $h }) => $h || 22}px;
  padding-left: ${({ $pad }) => ($pad === undefined ? 8 : $pad)}px;
  border: 1px solid ${({ $off }) => ($off ? '#cfcdc4' : '#7f9db9')};
  background: ${({ $off }) => ($off ? '#e0dfe3' : '#fff')};
  color: ${({ $off }) => ($off ? '#b1ad9d' : '#000')};
  font-size: 11px;
`;

const Select = styled.select`
  flex: 1;
  min-width: 0;
  height: 100%;
  border: 0;
  background: none;
  appearance: none;
  opacity: 1;
  font-family: ${({ $ui }) => ($ui ? 'inherit' : '"Liberation Sans", sans-serif')};
  font-size: ${({ $ui }) => ($ui ? 10 : 11)}px;
  svg + & {
    padding-left: 4px;
  }
`;

const ArrowBox = styled.span`
  display: flex;
  align-items: center;
  justify-content: center;
  flex: none;
  width: 16px;
  height: 100%;
  border: 1px solid ${({ $off }) => ($off ? '#dcdad0' : '#a9b0c8')};
  background: ${({ $off }) => ($off ? '#ebeae6' : 'linear-gradient(#fdfdfe, #c9cad8)')};
  color: ${({ $off }) => ($off ? '#b9b6a8' : '#333')};
`;

const Chevron = ({ d = 'M1 1l3 3 3-3', w = 8, h = 5 }) => (
  <IconSvg width={w} height={h} viewBox={`0 0 ${w} ${h}`}>
    <path d={d} fill="none" stroke="currentColor" strokeWidth="2" />
  </IconSvg>
);

const LineSample = styled.span`
  flex: none;
  width: ${({ $w }) => $w}px;
  height: 1px;
  margin: 0 6px 0 -4px;
  background: #555;
`;

const Combo = ({ label, value, off, ui, children, ...rest }) => (
  <ComboFrame $off={off} {...rest}>
    {children}
    <Select aria-label={label} disabled={off} $ui={ui} defaultValue={value}>
      <option value={value}>{value}</option>
    </Select>
    <ArrowBox $off={off}><Chevron /></ArrowBox>
  </ComboFrame>
);

const LayerFlags = () => (
  <>
    {['bulb', 'sun', 'freeze', 'lock'].map(n => <Icon key={n} name={n} />)}
    <Icon name="swatch" size={13} />
  </>
);

/* ---------- title and menu ---------- */

const Screen = styled.div`
  display: flex;
  flex-direction: column;
  height: 100vh;
  overflow: hidden;
`;

const TitleBar = styled.header`
  display: flex;
  align-items: center;
  gap: 9px;
  flex: none;
  height: 25px;
  padding: 0 2px;
  background: linear-gradient(#6b6a8c 0 1px, #e6e6ef 2px, #a8a7c3 5px, #bdbcd0 9px, #fdfdfe 18px, #f1f1f6 22px, #73728f 24px);
`;

const Title = styled.h1`
  flex: 1;
  margin: 0;
  font: 700 12px "Open Sans", sans-serif;
`;

const WindowButton = styled.button`
  display: flex;
  align-items: center;
  justify-content: center;
  width: 20px;
  height: 20px;
  border: 1px solid ${({ $red }) => ($red ? '#b8484e' : '#63648a')};
  border-radius: 3px;
  background: ${({ $red }) => ($red ? 'linear-gradient(#f09a94, #d8413c)' : 'linear-gradient(#f6f6fa, #a6a8bf)')};
  color: ${({ $red }) => ($red ? '#fff' : '#333')};
`;

const WindowButtons = styled.div`
  display: flex;
  gap: 2px;
`;

const MenuBar = styled.nav`
  display: flex;
  align-items: center;
  flex: none;
  height: 19px;
  padding-left: 4px;
  border-bottom: 1px solid #fff;
  background: #dfe1ed;
`;

const MenuItem = styled.button`
  flex: none;
  padding: 0 6px;
  border: 0;
  background: none;
  font-size: 10px;
`;

const Search = styled.input`
  width: 190px;
  height: 17px;
  margin-left: auto;
  padding-left: 3px;
  border: 0;
  border-left: 1px solid #bbb;
  background: #fff;
  &::placeholder {
    color: #aca899;
    opacity: 1;
  }
`;

const SearchTools = styled.div`
  display: flex;
  height: 17px;
  margin-right: 6px;
  border: 1px solid #9a9ba8;
  border-radius: 0 3px 3px 0;
  background: linear-gradient(#fff, #d6d8e3);
`;

const SmallTool = styled.button`
  display: flex;
  align-items: center;
  justify-content: center;
  width: ${({ $w }) => $w || 17}px;
  height: 16px;
  border: 0;
  border-left: ${({ $line }) => ($line ? '1px solid #9a9ba8' : '0')};
  background: none;
  color: #444;
`;

const MdiButton = styled(SmallTool)`
  border: 1px solid;
  border-color: #fff #d0d0d6 #d0d0d6 #fff;
  background: #ecebee;
`;

const WinGlyph = ({ kind }) => (
  <IconSvg width="12" height="12" viewBox="0 0 12 12" fill="none" stroke="currentColor" strokeWidth="2">
    {kind === 'min' && <path d="M2 9h6" strokeWidth="2.500" />}
    {kind === 'dash' && <path d="M1 6h10" strokeWidth="3" />}
    {kind === 'restore' && <path d="M4 3V1.500h7V8H9M1 4.500h7V10H1z" strokeWidth="1.300" />}
    {kind === 'close' && <path d="M2 2l8 8M10 2l-8 8" />}
  </IconSvg>
);

const menus = ['Файл', 'Правка', 'Вид', 'Вставка', 'Формат', 'Сервис', 'Рисование', 'Размеры', 'Редактировать', 'Окно', 'Справка'];
const winKinds = ['min', 'restore', 'close'];

/* ---------- toolbars ---------- */

const ToolRows = styled.div`
  flex: none;
`;

const ToolRow = styled.div`
  display: flex;
  height: 27px;
  gap: 1px;
`;

const Toolbar = styled.div`
  display: flex;
  align-items: center;
  flex: none;
  height: 27px;
  padding-right: 3px;
  border: 1px solid;
  border-color: #fff #a09fa5 #a09fa5 #fff;
  background: #efeef0;
`;

const Tools = ({ names, wide }) => names.split(' ').map((n, i) => {
  if (n === '|') return <Separator key={i} />;
  const w = n === 'down' ? 12 : wide ? 27 : 22;
  return <Tool key={i} name={n} $w={w} />;
});

/* ---------- workspace ---------- */

const Workspace = styled.div`
  display: flex;
  flex: 1;
  min-height: 0;
`;

const MainColumn = styled.div`
  display: flex;
  flex-direction: column;
  flex: 1;
  min-width: 0;
`;

const DrawingRow = styled.main`
  display: flex;
  flex: 1;
  min-height: 0;
  padding-bottom: 2px;
  border-bottom: 1px solid #fff;
`;

const SideTools = styled.div`
  display: flex;
  flex-direction: column;
  align-items: center;
  align-self: flex-start;
  flex: none;
  width: 23px;
  padding: 1px 0 4px;
  margin-right: 2px;
  border: 1px solid;
  border-color: #fff #a09fa5 #a09fa5 #fff;
  background: #efeef0;
`;

const SideGrip = styled.span`
  width: 19px;
  height: 6px;
  margin-bottom: 1px;
  border: solid #b3b2b8;
  border-width: 1px 0;
  background: linear-gradient(#fff 0 1px, #b3b2b8 1px 2px, #fff 2px);
`;

const DrawingPane = styled.section`
  display: flex;
  flex-direction: column;
  flex: 1;
  min-width: 0;
  border: solid #f4f3ea;
  border-width: 0 2px 0 0;
  border-left: 1px solid #777;
`;

const Canvas = styled.div`
  position: relative;
  flex: 1;
  overflow: hidden;
  border-top: 1px solid #555;
  background: #000;
`;

const UcsMark = styled.svg`
  position: absolute;
  left: 12px;
  bottom: 4px;
`;

const DynamicInput = styled.input`
  position: absolute;
  left: 628px;
  top: 469px;
  width: 16px;
  height: 18px;
  padding-left: 3px;
  border: 0;
  background: linear-gradient(90deg, #fff 2px, #b2b4bf 2px 8px, #fff 8px);
`;

const PromptEdge = styled.span`
  position: absolute;
  left: 617px;
  top: 476px;
  width: 10px;
  border-top: 1px dotted #999;
`;

const ContextMenu = styled.div`
  position: absolute;
  left: 617px;
  top: 477px;
  width: 201px;
  padding: 2px 2px 0;
  border: 1px solid #9d9da1;
  background: #fff;
`;

const ContextItem = styled.button`
  display: flex;
  align-items: center;
  width: 100%;
  height: 19px;
  padding: 0 4px 0 2px;
  border: 0;
  background: ${({ $hot }) => ($hot ? '#b2b4bf' : 'none')};
  text-align: left;
`;

const ItemIcon = styled.span`
  width: 21px;
`;

const ItemText = styled.span`
  flex: 1;
`;

const ContextLine = styled.div`
  height: 9px;
  padding: 3px 1px;
  &::before {
    content: "";
    display: block;
    height: 1px;
    background: #9d9da1;
  }
`;

const contextItems = [
  { a: '', u: 'E', b: 'nter' },
  { a: 'О', u: 'т', b: 'мена' },
  null,
  { a: '', u: 'Д', b: 'иаметр', hot: true },
  null,
  { a: 'Переопределение прив', u: 'я', b: 'зок', more: true },
  null,
  { a: 'Па', u: 'н', b: 'орамирование', icon: 'pan' },
  { a: '', u: 'З', b: 'умирование', icon: 'zoomRt' },
  null,
  { a: 'БыстрКальк', u: '', b: '', icon: 'calc' },
];

const Tabs = styled.div`
  display: flex;
  align-items: stretch;
  flex: none;
  height: 15px;
  border-top: 1px solid #b9b7a8;
  font: 11px "Liberation Sans", sans-serif;
`;

const TabNav = styled.button`
  display: flex;
  align-items: center;
  justify-content: center;
  width: 14px;
  border: 1px solid;
  border-color: #fff #aaa9a4 #aaa9a4 #fff;
  background: #ecebe6;
  color: #b3b0a0;
`;

const Tab = styled.button`
  padding: 0 ${({ $on }) => ($on ? 12 : 4)}px;
  border: 0;
  background: ${({ $on }) => ($on ? '#000' : 'none')};
  color: ${({ $on }) => ($on ? '#fff' : '#000')};
  clip-path: ${({ $on }) => ($on ? 'polygon(0 0, 100% 0, calc(100% - 5px) 100%, 5px 100%)' : 'none')};
  line-height: 14px;
`;

const TabEdge = () => (
  <IconSvg width="8" height="14" viewBox="0 0 8 14"><path d="M7 0L1 14" stroke="#555" /></IconSvg>
);

/* ---------- command line ---------- */

const CommandArea = styled.footer`
  display: flex;
  flex: none;
  margin-top: 3px;
  padding: 9px 7px 2px 6px;
  border-top: 2px solid #2b2b2b;
`;

const CommandBox = styled.div`
  flex: 1;
  min-width: 0;
  border-top: 2px solid #555;
  border-left: 1px solid #555;
  font: 13px "Liberation Mono", monospace;
`;

const CommandGrip = styled(Grip)`
  height: auto;
  margin: 0 2px 0 0;
`;

const Transcript = styled.div`
  display: flex;
  justify-content: space-between;
  padding-left: 1px;
  background: #fff;
  border-bottom: 1px solid #999;
`;

const Log = styled.p`
  margin: 0;
  line-height: 14px;
`;

const VScroll = styled.div`
  display: flex;
  flex-direction: column;
`;

const ScrollButton = styled.button`
  display: flex;
  align-items: center;
  justify-content: center;
  width: 15px;
  height: ${({ $h }) => $h || 15}px;
  border: 1px solid #a5a6ba;
  border-radius: 2px;
  background: linear-gradient(#fdfdfe, #c9cad8);
  color: #333;
`;

const PromptRow = styled.label`
  display: flex;
  align-items: center;
  height: 17px;
  margin-right: 17px;
  background: #fff;
`;

const Prompt = styled.input`
  flex: 1;
  min-width: 0;
  height: 17px;
  padding-left: 1px;
  border: 0;
  outline: 0;
`;

const HScroll = styled.div`
  display: flex;
  justify-content: space-between;
  width: 65px;
  padding: 1px;
  border-left: 2px solid #e6e6ea;
  background: #f3f5f9;
`;

const Thumb = styled(ScrollButton)`
  margin-right: auto;
  margin-left: 1px;
  color: #a5a6ba;
`;

const StatusBar = styled.div`
  flex: none;
  height: 23px;
  border-top: 1px solid #919197;
  background: linear-gradient(#fff 0 1px, #b9bac0 2px, #dcdde1 6px, #dfe0e4 16px, #c3c4c9 22px);
`;

/* ---------- dashboard palette ---------- */

const Dashboard = styled.aside`
  flex: none;
  width: 220px;
  border-left: 3px solid #fff;
  box-shadow: inset 2px 0 #aaa9ae, inset 4px 0 #33333a;
  padding: 0 1px 0 5px;
  background: #ebebed;
  border-top: 1px solid #8d8d92;
`;

const DashHeader = styled.div`
  display: flex;
  align-items: center;
  gap: 4px;
  height: 18px;
  padding: 0 6px;
`;

const DashButton = styled.button`
  display: flex;
  align-items: center;
  justify-content: center;
  width: 10px;
  height: 10px;
  border: 1px solid;
  border-color: #fff #999 #999 #fff;
  background: #f8f8f8;
  svg {
    width: 7px;
    height: 7px;
  }
`;

const DashGrip = styled.span`
  flex: 1;
  height: 6px;
  border: solid #b3b2b8;
  border-width: 1px 0;
  background: #fff;
`;

const Panel = styled.section`
  display: grid;
  grid-template-columns: 26px 1fr;
  padding-left: 5px;
  border-top: 1px solid #b5b4b9;
  border-right: 1px solid #b5b4b9;
  background: linear-gradient(90deg, ${({ $hot }) => ($hot ? '#fba94f, #fdcb8c' : '#d5d4d9, #dad9dd')} 21px, transparent 21px);
  &:last-child {
    border-bottom: 1px solid #b5b4b9;
  }
`;

const PanelIcon = styled.div`
  padding-top: 3px;
`;

const PanelRows = styled.div`
  padding-bottom: ${({ $b }) => $b || 2}px;
`;

const PanelRow = styled.div`
  display: flex;
  align-items: center;
  justify-content: flex-end;
  height: ${({ $h }) => $h || 24}px;
  padding-right: 3px;
`;

const DashedRow = styled(PanelRow)`
  margin: 3px 0 0 -10px;
  padding-left: 10px;
  border-top: 1px dashed #b5b4b9;
`;

const Field = styled.div`
  display: flex;
  gap: 3px;
  width: 156px;
`;

const Slider = styled.input`
  flex: 1;
  min-width: 0;
  height: 16px;
  border: 1px solid #a9c0c0;
  appearance: none;
  background: linear-gradient(#f0f0f0 0 6px, #8fa9b8 6px 7px, #f0f0f0 7px);
  &::-webkit-slider-thumb {
    appearance: none;
    width: 0;
  }
`;

const TextField = styled.input`
  width: 52px;
  height: 16px;
  padding-left: 2px;
  border: 1px solid #a9c0c0;
  background: #efefef;
  color: #aca899;
  font-size: 11px;
`;

const RenderProgress = styled.div`
  width: 156px;
  height: 15px;
  border: 1px solid #a9c0c0;
  background:
    linear-gradient(#b8c8d0, #b8c8d0) 39px bottom / 1px 4px no-repeat,
    linear-gradient(#b8c8d0, #b8c8d0) 77px bottom / 1px 4px no-repeat,
    linear-gradient(#b8c8d0, #b8c8d0) 115px bottom / 1px 4px no-repeat,
    #efefef;
`;

/* "sep:" in front of a name draws a divider on its left, "on:" marks it pressed */
const DashTools = ({ names }) => names.split(' ').map((n, i) => {
  const [name, ...flags] = n.split(':').reverse();
  const sep = flags.includes('sep');
  return <Tool key={i} name={name} $w={sep ? 24 : 21} $h={19} $sep={sep} $on={flags.includes('on')} />;
});

const DashPanel = ({ icon, hot, bottom, children }) => (
  <Panel $hot={hot}>
    <PanelIcon><Icon name={icon} size={22} /></PanelIcon>
    <PanelRows $b={bottom}>{children}</PanelRows>
  </Panel>
);

const LabeledIcon = ({ name }) => <IconButton as="span" $w={21}><Icon name={name} /></IconButton>;

function Palette() {
  return (
    <Dashboard>
      <DashHeader>
        <DashButton aria-label="Свернуть"><WinGlyph kind="dash" /></DashButton>
        <DashGrip />
        <DashButton aria-label="Закрыть"><WinGlyph kind="close" /></DashButton>
      </DashHeader>
      <DashPanel icon="sideLayers" bottom={4}>
        <PanelRow $h={25}><DashTools names="layerCurrent layers" /></PanelRow>
        <PanelRow>
          <Combo label="Конфигурация слоев" value="Несохраненная конфиг" ui $w={135} $h={20} $pad={2} />
          <DashTools names="layerState" />
        </PanelRow>
        <PanelRow>
          <LabeledIcon name="layerPrev" />
          <Combo label="Слой" value="0" off $w={156} $h={20} $pad={2}><LayerFlags /></Combo>
        </PanelRow>
      </DashPanel>
      <DashPanel icon="sideMake" hot bottom={3}>
        <PanelRow $h={27}><DashTools names="polysolid box wedge cone sphere cylinder pyramid torus" /></PanelRow>
        <PanelRow $h={22}><DashTools names="helix3 gizmo sep:extrude pull revolve sweep loft planar" /></PanelRow>
        <PanelRow><DashTools names="section sep:union subtract intersect sep:interfere xedges" /></PanelRow>
        <DashedRow $h={28}><DashTools names="helix polymesh sep:slice thicken sep:convSolid convSurf" /></DashedRow>
      </DashPanel>
      <DashPanel icon="sideStyle" bottom={7}>
        <PanelRow $h={28}><DashTools names="vsBox vsBall rgb sep:vsEdit vsManage" /></PanelRow>
        <PanelRow $h={22}><Combo label="Визуальный стиль" value="2D каркас" ui $w={156} $h={19} $pad={2} /></PanelRow>
      </DashPanel>
      <DashPanel icon="sideLight" bottom={4}>
        <PanelRow $h={21}><DashTools names="lightUser lightSun sky lightList" /></PanelRow>
        <PanelRow>
          <LabeledIcon name="calendar" />
          <Field>
            <Slider type="range" aria-label="Дата" disabled />
            <TextField aria-label="Дата солнца" defaultValue="21.09.2012" disabled />
          </Field>
        </PanelRow>
        <PanelRow>
          <LabeledIcon name="clock" />
          <Field>
            <Slider type="range" aria-label="Время" disabled />
            <TextField aria-label="Время солнца" defaultValue="15:00" disabled />
          </Field>
        </PanelRow>
      </DashPanel>
      <DashPanel icon="sideMat">
        <PanelRow $h={28}><DashTools names="vsBall matArrow sep:matLayers matMap" /></PanelRow>
      </DashPanel>
      <DashPanel icon="sideRender" bottom={4}>
        <PanelRow $h={25}><DashTools names="render renderWin" /></PanelRow>
        <PanelRow><Combo label="Тонирование" value="Средний" ui $w={156} $h={19} $pad={4} /></PanelRow>
        <PanelRow>
          <LabeledIcon name="cancel" />
          <RenderProgress />
        </PanelRow>
      </DashPanel>
      <DashPanel icon="sideNav">
        <PanelRow $h={27}><DashTools names="pan zoomRt sep:orbit camOrbit walk sep:camera on:sep:parallel persp" /></PanelRow>
        <PanelRow>
          <LabeledIcon name="back" />
          <Combo label="Вид" value="Текущий вид не сохранен" ui $w={156} $h={19} $pad={2} />
        </PanelRow>
      </DashPanel>
    </Dashboard>
  );
}

function TopBars() {
  return (
    <>
      <TitleBar>
        <Icon name="app" />
        <Title>AutoCAD 2008 - [Чертеж1.dwg]</Title>
        <WindowButtons>
          {winKinds.map(k => (
            <WindowButton key={k} aria-label={k} $red={k === 'close'}><WinGlyph kind={k} /></WindowButton>
          ))}
        </WindowButtons>
      </TitleBar>
      <MenuBar>
        <Icon name="doc" size={14} />
        {menus.map(m => <MenuItem key={m} type="button">{m}</MenuItem>)}
        <Search aria-label="Вопрос" placeholder="Введите вопрос для справки" />
        <SearchTools>
          <SmallTool $w={28} aria-label="Найти"><Icon name="find" size={12} /><Icon name="down" size={12} /></SmallTool>
          <SmallTool $line aria-label="Связь"><Icon name="dish" size={12} /></SmallTool>
          <SmallTool $line aria-label="Избранное"><Icon name="star" size={11} /></SmallTool>
        </SearchTools>
        {winKinds.map(k => <MdiButton key={k} aria-label={k}><WinGlyph kind={k} /></MdiButton>)}
      </MenuBar>
      <ToolRows>
        <ToolRow>
          <Toolbar>
            <Grip />
            <Combo label="Рабочее пространство" value="3D моделирование" off ui $w={166} />
            <Tools names="gearFrame house" />
          </Toolbar>
          <Toolbar>
            <Grip />
            <Tools names="new open save | print preview publish globe | cut copy paste brush bolt | undo down redo down | pan zoomRt zoomWin zoomPrev | props grid palettes sheets markup calc | help" />
          </Toolbar>
          <Toolbar>
            <Grip />
            <Tools names="ucs | ucsWorld ucsPrev | ucsFace ucsObj ucsView | ucsOrigin ucsZ ucs3 | ucsX ucsY ucsZr | ucsApply" />
          </Toolbar>
        </ToolRow>
        <ToolRow>
          <Toolbar>
            <Grip />
            <Tools names="layers" />
            <Combo label="Слой" value="0" off $w={286} $pad={2}><LayerFlags /></Combo>
            <Tools names="layerCurrent layerPrev layerState" />
          </Toolbar>
          <Toolbar>
            <Grip />
            <Tools names="refEdit vpNew vpPoly vpObj vpClip |" />
            <Combo label="Масштаб" value=" " off $w={95} />
          </Toolbar>
          <Toolbar>
            <Grip />
            <Tools names="textStyle" />
            <Combo label="Текст" value="Standard" off $w={115} $pad={16} />
            <Tools wide names="dimStyle" />
            <Combo label="Размер" value="ISO-25" off $w={115} $pad={16} />
            <Tools wide names="tableStyle" />
            <Combo label="Таблица" value="Standard" off $w={115} $pad={4} />
            <Tools wide names="leaderStyle" />
            <Combo label="Мультивыноска" value="Standard" off $w={115} $pad={16} />
          </Toolbar>
        </ToolRow>
        <ToolRow>
          <Toolbar>
            <Grip />
            <Tools names="leader leaderAdd leaderDel | leaderAlign leaderCollect |" />
            <Combo label="Стиль мультивыноски" value="Standard" off $w={115} $pad={16} />
            <Tools names="leaderStyle" />
          </Toolbar>
          <Toolbar>
            <Grip />
            <Tools names="orbit freeOrbit contOrbit" />
          </Toolbar>
          <Toolbar>
            <Grip />
            <Combo label="Цвет" value="Послою" off $w={144} $pad={2}><Icon name="swatch" size={13} /></Combo>
            <Tools names="|" />
            <Combo label="Тип линий" value="Послою" off $w={152}><LineSample $w={56} /></Combo>
            <Tools names="|" />
            <Combo label="Вес линий" value="Послою" off $w={119}><LineSample $w={34} /></Combo>
            <Tools names="|" />
            <Combo label="Стиль печати" value="Поцвету" off $w={116} />
          </Toolbar>
          <Toolbar>
            <Grip />
            <Tools names="dist area mass | list locate" />
          </Toolbar>
        </ToolRow>
      </ToolRows>
    </>
  );
}

const SideToolbar = ({ names }) => (
  <SideTools>
    <SideGrip />
    {names.split(' ').map(n => <Tool key={n} name={n} $h={21} />)}
  </SideTools>
);

function Drawing() {
  return (
    <DrawingPane>
      <Canvas>
        <UcsMark width="150" height="160" viewBox="0 0 150 160" fill="none" stroke="#c8c8c8">
          <path d="M4.500 131.500h15v13h-15zM11.500 131V65M20 138.500h66" />
          <path d="M11.500 46l7 19h-14zM104 138.500l-18 7v-14z" fill="#222" />
          <g stroke="none" fill="#c8c8c8" fontFamily="Lato, sans-serif" fontWeight="300" fontSize="27">
            <text x="5" y="33">Y</text>
            <text x="119" y="148">X</text>
          </g>
        </UcsMark>
        <PromptEdge />
        <DynamicInput aria-label="Радиус" defaultValue="0" />
        <ContextMenu>
          {contextItems.map((it, i) => (it ? (
            <ContextItem key={i} type="button" $hot={it.hot}>
              <ItemIcon>{it.icon && <Icon name={it.icon} />}</ItemIcon>
              <ItemText>{it.a}<u>{it.u}</u>{it.b}</ItemText>
              {it.more && (
                <IconSvg width="6" height="8" viewBox="0 0 6 8"><path d="M1 0l4 4-4 4z" /></IconSvg>
              )}
            </ContextItem>
          ) : <ContextLine key={i} />))}
        </ContextMenu>
      </Canvas>
      <Tabs>
        {['M2 0v8M8 0L4 4l4 4z', 'M7 0L3 4l4 4z', 'M2 0l4 4-4 4z', 'M1 0l4 4-4 4zM7 0v8'].map(d => (
          <TabNav key={d} aria-label="Лист">
            <IconSvg width="9" height="8" viewBox="0 0 9 8"><path d={d} fill="currentColor" stroke="currentColor" /></IconSvg>
          </TabNav>
        ))}
        <Tab $on>Модель</Tab>
        <Tab>Лист1</Tab>
        <TabEdge />
        <Tab>Лист2</Tab>
        <TabEdge />
      </Tabs>
    </DrawingPane>
  );
}

function CommandLine() {
  return (
    <CommandArea>
      <CommandGrip />
      <CommandBox>
        <Transcript>
          <Log>Центральная точка основания:</Log>
          <VScroll>
            <ScrollButton $h={14} aria-label="Вверх"><Chevron d="M1 4l3-3 3 3" /></ScrollButton>
            <ScrollButton $h={14} aria-label="Вниз"><Chevron /></ScrollButton>
          </VScroll>
        </Transcript>
        <PromptRow>
          <Prompt aria-label="Командная строка" defaultValue="Радиус основания или [Диаметр] <1.0000>:" />
          <HScroll>
            <ScrollButton aria-label="Влево"><Chevron d="M4 1L1 4l3 3" w={5} h={8} /></ScrollButton>
            <Thumb aria-label="Прокрутка"><Chevron d="M0 0v7M3 0v7M6 0v7" w={7} h={7} /></Thumb>
            <ScrollButton aria-label="Вправо"><Chevron d="M1 1l3 3-3 3" w={5} h={8} /></ScrollButton>
          </HScroll>
        </PromptRow>
      </CommandBox>
    </CommandArea>
  );
}

function App() {
  return (
    <>
      <GlobalStyle />
      <Screen>
        <TopBars />
        <Workspace>
          <MainColumn>
            <DrawingRow>
              <SideToolbar names="line xline pline polygon rect arc circle cloud spline ellipse ellArc insert block point hatch gradient region table mtext" />
              <Drawing />
              <SideToolbar names="erase copyObj mirror offset array move rotate scale stretch trim extend breakPt breakGap join chamfer fillet explode center" />
            </DrawingRow>
            <CommandLine />
          </MainColumn>
          <Palette />
        </Workspace>
        <StatusBar />
      </Screen>
    </>
  );
}

export default App;
